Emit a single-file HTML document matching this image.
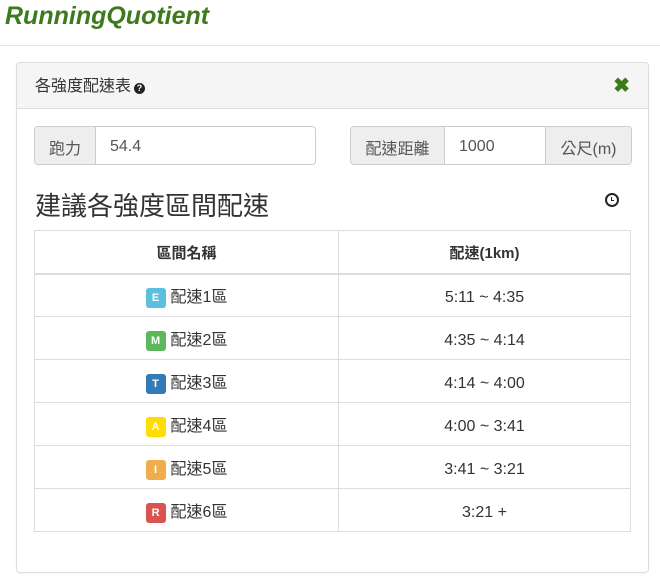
<!DOCTYPE html>
<html><head><meta charset="utf-8"><style>
body{margin:0;width:660px;height:587px;background:#fff;font-family:"Liberation Sans","Noto Sans CJK TC",sans-serif;color:#333;position:relative;overflow:hidden}
.logo{position:absolute;left:5px;top:2px;font:italic bold 25px "Liberation Sans",sans-serif;color:#3c7a1c}
.hr{position:absolute;left:0;right:0;top:45px;border-top:1px solid #e5e5e5}
.panel{position:absolute;left:16px;top:62px;width:631px;height:509px;border:1px solid #ddd;border-radius:4px;box-shadow:0 1px 2px rgba(0,0,0,.05)}
.ph{height:45px;background:#f5f5f5;border-bottom:1px solid #ddd;border-radius:4px 4px 0 0;position:relative}
.ph .t{position:absolute;left:18px;top:13px;font-size:16px;line-height:22px;color:#333}
.q{display:inline-block;width:11px;height:11px;border-radius:50%;background:#222;color:#fff;font-size:9px;line-height:11px;text-align:center;font-weight:bold;vertical-align:0px;margin-left:3px}
.x{position:absolute;right:18px;top:10px;color:#3c7a1c;font-size:20px;font-weight:bold}
.ig{position:absolute;top:63px;height:37px;display:flex;border:1px solid #ccc;border-radius:4px;overflow:hidden;font-size:16px}
.ig .a{background:#eee;color:#555;display:flex;align-items:center;justify-content:center;padding-top:2px}
.ig .v{background:#fff;color:#555;display:flex;align-items:center;padding-left:14px;padding-top:2px}
h2{position:absolute;left:18px;top:126px;margin:0;font-size:26px;line-height:34px;font-weight:normal;color:#333}
.clk{position:absolute;left:588px;top:130px;width:10px;height:10px;border:2px solid #222;border-radius:50%}
.clk:after{content:"";position:absolute;left:4px;top:2px;height:4px;border-left:1.5px solid #222;border-bottom:1.5px solid #222;box-sizing:border-box;width:3px}
table{position:absolute;left:17px;top:167px;width:597px;border-collapse:collapse;font-size:16px}
td,th{border:1px solid #ddd;text-align:center;padding:0}
td{height:43px;padding:6px 0 0;box-sizing:border-box}
th{font-weight:bold;border-bottom:2px solid #ddd;font-size:15px;padding:2px 0 0;box-sizing:border-box}
.c{display:inline-flex;align-items:center;line-height:22px}
.b{display:inline-block;width:20px;height:20px;border-radius:3px;color:#fff;font-size:11px;line-height:20px;text-align:center;margin-right:5px;font-weight:bold}
</style></head><body>
<div class="logo">RunningQuotient</div>
<div class="hr"></div>
<div class="panel">
<div class="ph"><span class="t">各強度配速表<span class="q">?</span></span><span class="x">✖</span></div>
<div class="ig" style="left:17px;width:280px"><div class="a" style="width:60px;border-right:1px solid #ccc">跑力</div><div class="v" style="flex:1">54.4</div></div>
<div class="ig" style="left:333px;width:280px"><div class="a" style="width:93px;border-right:1px solid #ccc">配速距離</div><div class="v" style="width:86px">1000</div><div class="a" style="flex:1;border-left:1px solid #ccc">公尺(m)</div></div>
<h2>建議各強度區間配速</h2>
<div class="clk"></div>
<table>
<tr><th style="width:304px;height:43px">區間名稱</th><th style="height:43px">配速(1km)</th></tr>
<tr><td><span class="c"><span class="b" style="background:#5bc0de">E</span>配速1區</span></td><td>5:11 ~ 4:35</td></tr>
<tr><td><span class="c"><span class="b" style="background:#5cb85c">M</span>配速2區</span></td><td>4:35 ~ 4:14</td></tr>
<tr><td><span class="c"><span class="b" style="background:#337ab7">T</span>配速3區</span></td><td>4:14 ~ 4:00</td></tr>
<tr><td><span class="c"><span class="b" style="background:#ffdd00">A</span>配速4區</span></td><td>4:00 ~ 3:41</td></tr>
<tr><td><span class="c"><span class="b" style="background:#f0ad4e">I</span>配速5區</span></td><td>3:41 ~ 3:21</td></tr>
<tr><td><span class="c"><span class="b" style="background:#d9534f">R</span>配速6區</span></td><td>3:21 +</td></tr>
</table>
</div>
</body></html>
